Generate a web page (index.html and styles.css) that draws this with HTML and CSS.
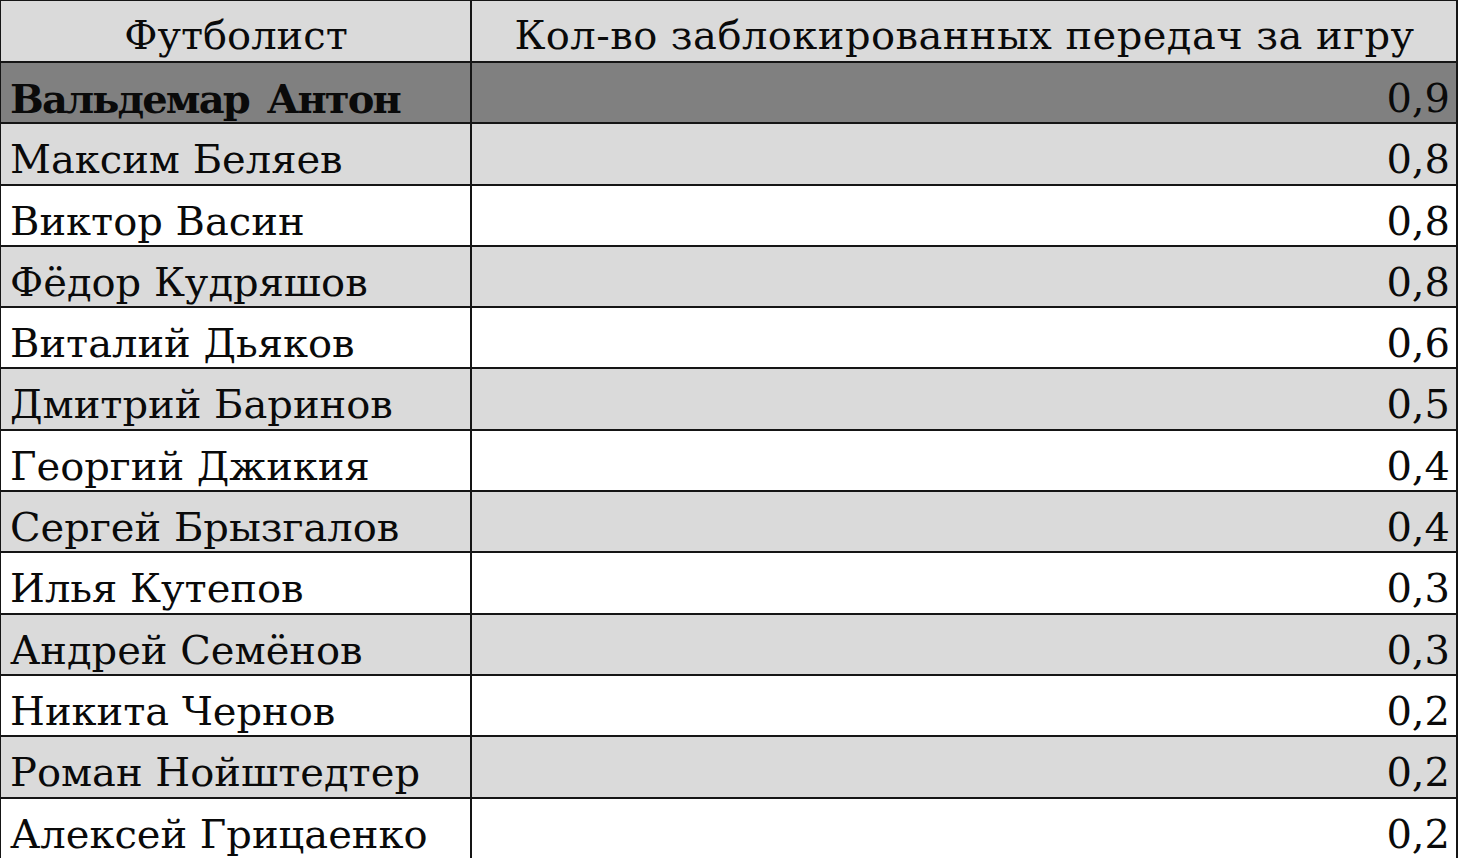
FILE: index.html
```html
<!DOCTYPE html>
<html lang="ru">
<head>
<meta charset="utf-8">
<link rel="stylesheet" href="styles.css">
</head>
<body>
<div class="table">
  <div class="row head"><div class="cell c1">Футболист</div><div class="cell c2">Кол-во заблокированных передач за игру</div></div>
  <div class="row top"><div class="cell c1">Вальдемар Антон</div><div class="cell num">0,9</div></div>
  <div class="row alt"><div class="cell c1">Максим Беляев</div><div class="cell num">0,8</div></div>
  <div class="row"><div class="cell c1">Виктор Васин</div><div class="cell num">0,8</div></div>
  <div class="row alt"><div class="cell c1">Фёдор Кудряшов</div><div class="cell num">0,8</div></div>
  <div class="row"><div class="cell c1">Виталий Дьяков</div><div class="cell num">0,6</div></div>
  <div class="row alt"><div class="cell c1">Дмитрий Баринов</div><div class="cell num">0,5</div></div>
  <div class="row"><div class="cell c1">Георгий Джикия</div><div class="cell num">0,4</div></div>
  <div class="row alt"><div class="cell c1">Сергей Брызгалов</div><div class="cell num">0,4</div></div>
  <div class="row"><div class="cell c1">Илья Кутепов</div><div class="cell num">0,3</div></div>
  <div class="row alt"><div class="cell c1">Андрей Семёнов</div><div class="cell num">0,3</div></div>
  <div class="row"><div class="cell c1">Никита Чернов</div><div class="cell num">0,2</div></div>
  <div class="row alt"><div class="cell c1">Роман Нойштедтер</div><div class="cell num">0,2</div></div>
  <div class="row"><div class="cell c1">Алексей Грицаенко</div><div class="cell num">0,2</div></div>
</div>
</body>
</html>
```

FILE: styles.css
```css
html, body {
  margin: 0;
  padding: 0;
  background: #ffffff;
  overflow: hidden;
}
.table {
  width: 1455px;
  margin-left: 0;
  padding: 1px 2px 2px 1px;
  background: #151515;
  display: flex;
  flex-direction: column;
  gap: 2px;
  font-family: "DejaVu Serif", "Liberation Serif", serif;
  font-size: 40px;
  color: #0a0a0a;
}
.table .row {
  display: grid;
  grid-template-columns: 469px 1fr;
  column-gap: 2px;
  height: 59.3px;
  flex: none;
}
.row.head { height: 60px; }
.cell {
  background: #ffffff;
  line-height: 47px;
  padding: 12px 8px 0 9px;
  white-space: nowrap;
  overflow: hidden;
}
.row.head .cell { padding-top: 11px; }
.row.head .cell, .row.alt .cell { background: #dadada; }
.row.top .cell { background: #808080; }
.row.top .c1 { font-weight: bold; letter-spacing: -1.9px; word-spacing: 6px; }
.row.head .cell { text-align: center; }
.row.head .c2 { letter-spacing: 0.45px; }
.num { text-align: right; padding-right: 6px; }
```
